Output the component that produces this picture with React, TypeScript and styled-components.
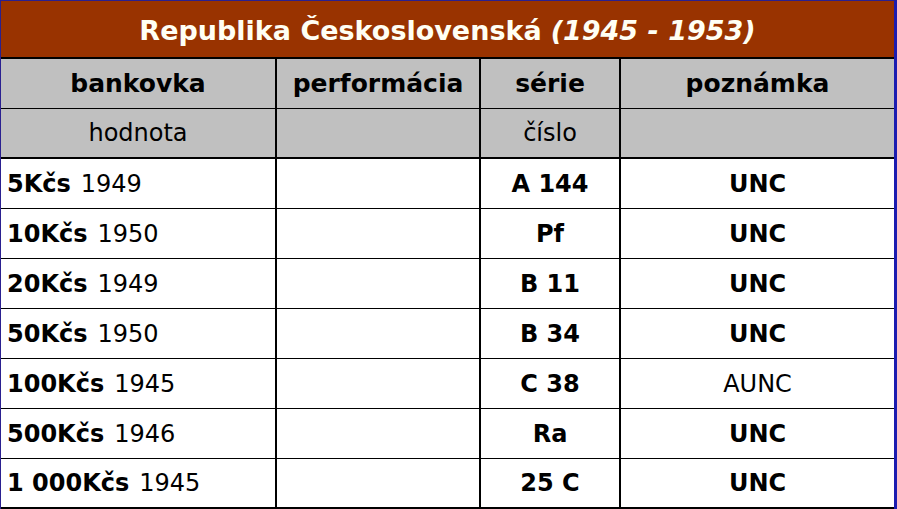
import React, { FC } from "react";
import styled, { createGlobalStyle } from "styled-components";

const GlobalStyle = createGlobalStyle`
  html, body {
    margin: 0;
    padding: 0;
    background: #ffffff;
  }
  body {
    font-family: "DejaVu Sans", Verdana, sans-serif;
    color: #000000;
  }
`;

const Sheet = styled.div`
  width: 897px;
  height: 509px;
  box-sizing: border-box;
  border-top: 1px solid #2a2090;
  border-left: 1px solid #2a2090;
  border-right: 3px solid #1c1cb0;
  display: flex;
  flex-direction: column;
  overflow: hidden;
`;

const TitleBar = styled.div`
  height: 58px;
  box-sizing: border-box;
  border-bottom: 2px solid #000000;
  background: #993300;
  color: #fffff4;
  font-size: 27px;
  font-weight: bold;
  display: flex;
  align-items: center;
  justify-content: center;
  padding-top: 2px;
`;

const Years = styled.em`
  font-style: italic;
  margin-left: 9px;
`;

const Row = styled.div<{ $head?: boolean; $thick?: boolean }>`
  display: grid;
  grid-template-columns: 276px 204px 140px 273px;
  height: 50px;
  box-sizing: border-box;
  border-bottom: ${(p) => (p.$thick ? 2 : 1)}px solid #000000;
  background: ${(p) => (p.$head ? "#c0c0c0" : "#ffffff")};
`;

const Cell = styled.div<{
  $align?: "left" | "center";
  $bold?: boolean;
  $last?: boolean;
  $big?: boolean;
}>`
  box-sizing: border-box;
  border-right: ${(p) => (p.$last ? "none" : "2px solid #000000")};
  display: flex;
  align-items: center;
  justify-content: ${(p) => (p.$align === "left" ? "flex-start" : "center")};
  padding-left: ${(p) => (p.$align === "left" ? "6px" : "0")};
  font-size: ${(p) => (p.$big ? 25 : 24)}px;
  font-weight: ${(p) => (p.$bold ? "bold" : "normal")};
  white-space: nowrap;
`;

const Value = styled.b`
  font-weight: bold;
  margin-right: 10px;
`;

type Note = {
  value: string;
  year: string;
  series: string;
  grade: string;
  strong: boolean;
};

const notes: Note[] = [
  { value: "5Kčs", year: "1949", series: "A 144", grade: "UNC", strong: true },
  { value: "10Kčs", year: "1950", series: "Pf", grade: "UNC", strong: true },
  { value: "20Kčs", year: "1949", series: "B 11", grade: "UNC", strong: true },
  { value: "50Kčs", year: "1950", series: "B 34", grade: "UNC", strong: true },
  { value: "100Kčs", year: "1945", series: "C 38", grade: "AUNC", strong: false },
  { value: "500Kčs", year: "1946", series: "Ra", grade: "UNC", strong: true },
  { value: "1 000Kčs", year: "1945", series: "25 C", grade: "UNC", strong: true },
];

const App: FC = () => {
  return (
    <>
      <GlobalStyle />
      <Sheet>
        <TitleBar>
          Republika Československá <Years>(1945 - 1953)</Years>
        </TitleBar>
        <Row $head>
          <Cell $bold $big>bankovka</Cell>
          <Cell $bold $big>performácia</Cell>
          <Cell $bold $big>série</Cell>
          <Cell $bold $big $last>poznámka</Cell>
        </Row>
        <Row $head $thick>
          <Cell>hodnota</Cell>
          <Cell />
          <Cell>číslo</Cell>
          <Cell $last />
        </Row>
        {notes.map((n, idx) => (
          <Row key={idx} $thick={idx === notes.length - 1}>
            <Cell $align="left">
              <Value>{n.value}</Value>
              {n.year}
            </Cell>
            <Cell />
            <Cell $bold>{n.series}</Cell>
            <Cell $bold={n.strong} $last>
              {n.grade}
            </Cell>
          </Row>
        ))}
      </Sheet>
    </>
  );
};

export default App;
